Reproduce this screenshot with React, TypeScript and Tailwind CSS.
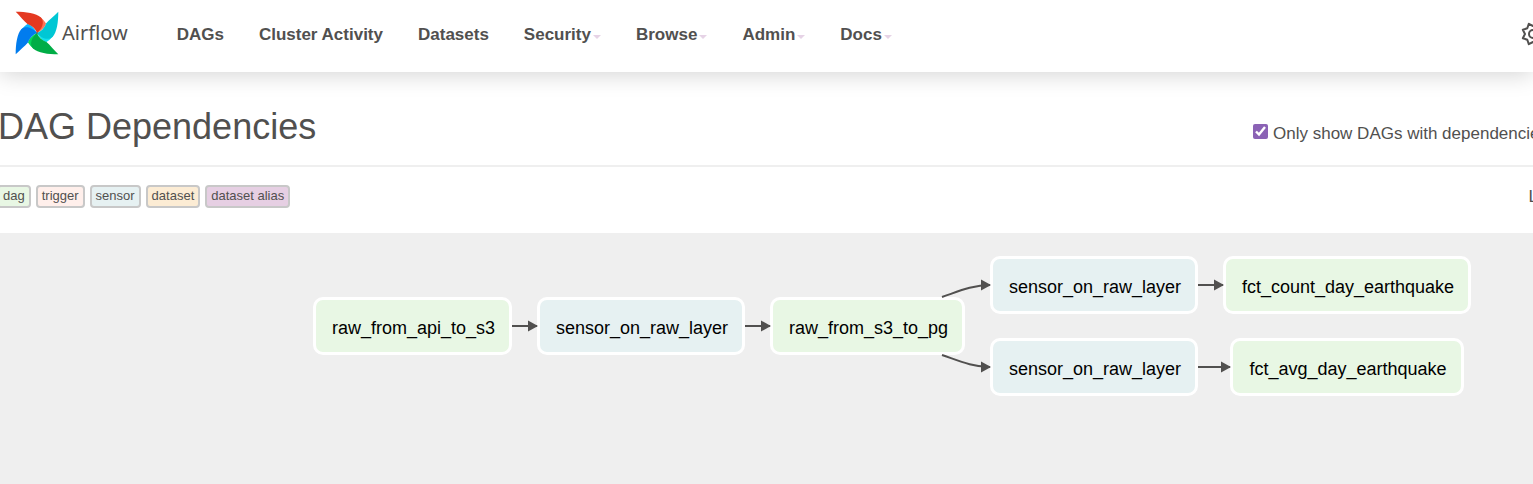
type NodeKind = 'dag' | 'sensor';

interface GraphNode {
  id: string;
  label: string;
  kind: NodeKind;
  place: string;
}

const links = [
  { label: 'DAGs', menu: false },
  { label: 'Cluster Activity', menu: false },
  { label: 'Datasets', menu: false },
  { label: 'Security', menu: true },
  { label: 'Browse', menu: true },
  { label: 'Admin', menu: true },
  { label: 'Docs', menu: true },
];

const legend = [
  { label: 'dag', color: 'bg-[#e8f7e4]' },
  { label: 'trigger', color: 'bg-[#ffefeb]' },
  { label: 'sensor', color: 'bg-[#e6f1f2]' },
  { label: 'dataset', color: 'bg-[#fcecd4]' },
  { label: 'dataset alias', color: 'bg-[#e6cfe3]' },
];

const nodes: GraphNode[] = [
  { id: 'api', label: 'raw_from_api_to_s3', kind: 'dag', place: 'left-[313px] top-[64px] w-[199px]' },
  { id: 's1', label: 'sensor_on_raw_layer', kind: 'sensor', place: 'left-[537px] top-[64px] w-[208px]' },
  { id: 'pg', label: 'raw_from_s3_to_pg', kind: 'dag', place: 'left-[770px] top-[64px] w-[195px]' },
  { id: 's2', label: 'sensor_on_raw_layer', kind: 'sensor', place: 'left-[990px] top-[23px] w-[208px]' },
  { id: 's3', label: 'sensor_on_raw_layer', kind: 'sensor', place: 'left-[990px] top-[105px] w-[208px]' },
  { id: 'count', label: 'fct_count_day_earthquake', kind: 'dag', place: 'left-[1223px] top-[23px] w-[248px]' },
  { id: 'avg', label: 'fct_avg_day_earthquake', kind: 'dag', place: 'left-[1230px] top-[105px] w-[234px]' },
];

const edges = [
  'M512 93H537',
  'M745 93H770',
  'M942 64C957 59 972 52 990 52',
  'M942 122C957 127 972 134 990 134',
  'M1198 52H1223',
  'M1198 134H1230',
];

const kindColor: Record<NodeKind, string> = {
  dag: 'bg-[#e8f7e4]',
  sensor: 'bg-[#e6f1f2]',
};

const blades = [
  { turn: 0, main: '#e43921', fold: '#ff7557' },
  { turn: 90, main: '#00c7d4', fold: '#11e1ee' },
  { turn: 180, main: '#00ad46', fold: '#04d659' },
  { turn: 270, main: '#017cee', fold: '#0cb6ff' },
];

function Pinwheel() {
  return (
    <svg viewBox="-22 -22 44 44" className="size-11" aria-hidden="true">
      {blades.map((b) => (
        <path
          key={b.turn}
          transform={`rotate(${b.turn})`}
          fill={b.fold}
          d="M3-16C5.500-14 7.500-12 9-9.500C8.500-6 4-2 0 0L2-8Z"
        />
      ))}
      {blades.map((b) => (
        <path
          key={b.turn}
          transform={`rotate(${b.turn})`}
          fill={b.main}
          d="M-21.300-21.300C-11-21.300-1-20 4-15.500C8-11 5-4 0 0C-1.500-4-5-7.500-9.500-9C-13-12-17-17-21.300-21.300Z"
        />
      ))}
      <circle r="0.8" fill="#51504f" />
    </svg>
  );
}

function Gear() {
  return (
    <svg
      viewBox="-12 -12 24 24"
      className="size-6"
      fill="none"
      stroke="#51504f"
      strokeWidth="2"
      strokeLinejoin="round"
      aria-hidden="true"
    >
      <path d="M-8 0L-10.200-4.200L-5.700-5.700L-4.200-10.200L0-8L4.200-10.200L5.700-5.700L10.200-4.200L8 0L10.200 4.200L5.700 5.700L4.200 10.200L0 8L-4.200 10.200L-5.700 5.700L-10.200 4.200Z" />
      <circle r="4" />
    </svg>
  );
}

function Header() {
  return (
    <header className="relative flex h-[72px] items-center bg-white pb-1 shadow-[0_2px_22px_rgba(0,0,0,0.18)]">
      <a href="#home" className="ml-[15px] flex items-center gap-[3px] pb-[3px]">
        <Pinwheel />
        <span className="pt-px font-['Noto_Sans',sans-serif] text-[20px] leading-6">Airflow</span>
      </a>
      <nav className="ml-[49px] flex gap-[35px] pt-[2px] text-[17px] font-bold leading-6">
        {links.map((link) => (
          <a key={link.label} href="#nav" className="flex items-center whitespace-nowrap">
            {link.label}
            {link.menu && (
              <span className="ml-[2px] mt-1 border-x-4 border-t-4 border-x-transparent border-t-[#e6d3e6]" />
            )}
          </a>
        ))}
      </nav>
      <button type="button" aria-label="Settings" className="-mr-3 ml-auto">
        <Gear />
      </button>
    </header>
  );
}

function Graph() {
  return (
    <section aria-label="Dependency graph" className="relative flex-1 bg-[#efefef]">
      {nodes.map((node) => (
        <div
          key={node.id}
          className={`absolute flex h-[58px] items-center justify-center whitespace-nowrap rounded-[10px] border-[3px] border-white pl-[2px] pt-1 text-[18px] leading-6 text-black ${kindColor[node.kind]} ${node.place}`}
        >
          {node.label}
        </div>
      ))}
      <svg className="absolute left-0 top-0 h-[200px] w-[1533px]" aria-hidden="true">
        <defs>
          <marker id="arrow" viewBox="0 0 10 12" refX="9" refY="6" markerWidth="10" markerHeight="12" markerUnits="userSpaceOnUse" orient="0">
            <path d="M0 0.500L10 6L0 11.500Z" fill="#51504f" />
          </marker>
        </defs>
        {edges.map((d) => (
          <path key={d} d={d} fill="none" stroke="#51504f" strokeWidth="2" markerEnd="url(#arrow)" />
        ))}
      </svg>
    </section>
  );
}

export default function App() {
  return (
    <div className="flex min-h-screen flex-col overflow-hidden bg-white font-['Liberation_Sans',Arial,sans-serif] text-[#51504f]">
      <Header />
      <div className="-ml-[2px] -mr-[15px] flex h-[95px] items-center justify-between border-b-2 border-[#efefef] pt-4">
        <h1 className="text-[36px] leading-10">DAG Dependencies</h1>
        <label className="flex items-center gap-[5px] whitespace-nowrap pt-[14px] text-[17px] leading-6">
          <input type="checkbox" defaultChecked className="mb-1 size-[15px] accent-[#8b62b5]" />
          Only show DAGs with dependencies
        </label>
      </div>
      <div className="-ml-[3px] -mr-[5px] flex h-[66px] items-start justify-between pt-[18px]">
        <ul className="flex gap-[5px]">
          {legend.map((item) => (
            <li
              key={item.label}
              className={`rounded-[4px] border-2 border-[#c8c8c8] px-1 pb-[2px] text-[13px] leading-[17px] ${item.color}`}
            >
              {item.label}
            </li>
          ))}
        </ul>
        <span className="text-[17px] leading-6">L</span>
      </div>
      <Graph />
    </div>
  );
}
